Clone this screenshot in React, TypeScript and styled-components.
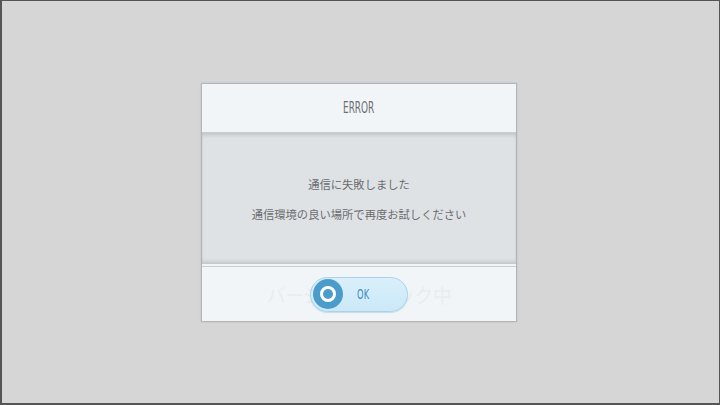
import { FC } from "react";
import styled, { createGlobalStyle } from "styled-components";

const GlobalStyle = createGlobalStyle`
    html, body {
        margin: 0;
        padding: 0;
    }
    body {
        font-family: "Noto Sans CJK JP", "Noto Sans", sans-serif;
    }
`;

const Screen = styled.div`
    box-sizing: border-box;
    width: 720px;
    height: 405px;
    background-color: #d6d6d6;
    border-style: solid;
    border-color: #555555;
    border-width: 1px 1px 2px 2px;
    display: flex;
    align-items: flex-start;
    justify-content: center;
    padding-top: 82px;
    padding-right: 3px;
`;

const Dialog = styled.div`
    width: 314px;
    border: 1px solid #b3b6b9;
    background-color: #f2f5f8;
    box-shadow: 0 0 2px rgba(0, 0, 0, 0.12);
    display: flex;
    flex-direction: column;
`;

const Header = styled.div`
    height: 48px;
    display: flex;
    align-items: center;
    justify-content: center;
    background-color: #f2f5f8;
    border-bottom: 1px solid #c9ccd0;
`;

const Title = styled.span`
    font-family: "DejaVu Sans Condensed", "DejaVu Sans", sans-serif;
    font-size: 15px;
    color: #6b6e72;
    transform: scaleX(0.66);
`;

const Body = styled.div`
    height: 131px;
    background-color: #dfe2e5;
    box-shadow: inset 0 4px 4px -2px rgba(0, 0, 0, 0.14),
        inset 0 -4px 4px -2px rgba(0, 0, 0, 0.14);
    display: flex;
    flex-direction: column;
    align-items: center;
    justify-content: center;
    gap: 17px;
    padding-top: 2px;
    box-sizing: border-box;
`;

const Message = styled.p`
    margin: 0;
    font-size: 11.3px;
    line-height: 13px;
    color: #6a6d70;
`;

const Footer = styled.div`
    height: 54px;
    margin-top: 2px;
    border-top: 1px solid #c9ccd0;
    background-color: #f2f5f8;
    display: grid;
    place-items: center;
`;

const GhostText = styled.span`
    grid-area: 1 / 1;
    font-size: 19px;
    letter-spacing: -0.5px;
    color: #e9ecef;
`;

const OkButton = styled.button`
    grid-area: 1 / 1;
    width: 98px;
    height: 35px;
    border-radius: 18px;
    border: 1px solid #a9d3ea;
    background: linear-gradient(#daf0fb, #cbe8f7);
    box-shadow: 0 1px 1px rgba(80, 140, 180, 0.25);
    display: flex;
    align-items: center;
    padding: 0 0 0 2px;
    gap: 11px;
    cursor: pointer;
`;

const Circle = styled.span`
    width: 30px;
    height: 30px;
    border-radius: 50%;
    background-color: #4b9ccb;
    display: grid;
    place-items: center;
`;

const Ring = styled.span`
    box-sizing: border-box;
    width: 16px;
    height: 16px;
    border-radius: 50%;
    border: 3.5px solid #ffffff;
`;

const Label = styled.span`
    font-family: "DejaVu Sans Condensed", "DejaVu Sans", sans-serif;
    font-size: 14px;
    color: #3f8dbd;
    transform: scaleX(0.66);
`;

const App: FC = () => {
    return (
        <>
            <GlobalStyle />
            <Screen>
                <Dialog>
                    <Header>
                        <Title>ERROR</Title>
                    </Header>
                    <Body>
                        <Message>通信に失敗しました</Message>
                        <Message>通信環境の良い場所で再度お試しください</Message>
                    </Body>
                    <Footer>
                        <GhostText>バージョンチェック中</GhostText>
                        <OkButton>
                            <Circle>
                                <Ring />
                            </Circle>
                            <Label>OK</Label>
                        </OkButton>
                    </Footer>
                </Dialog>
            </Screen>
        </>
    );
};

export default App;
